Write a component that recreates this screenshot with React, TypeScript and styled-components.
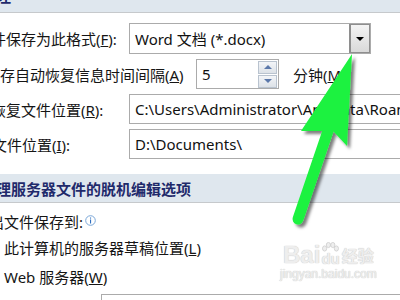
import React from 'react'
import styled, { createGlobalStyle } from 'styled-components'

const GlobalStyle = createGlobalStyle`
  html, body {
    margin: 0;
    padding: 0;
    background: #ffffff;
  }
`

const Page = styled.div`
  position: relative;
  width: 400px;
  height: 300px;
  overflow: hidden;
  background: #ffffff;
  color: #151515;
  font-family: "Noto Sans", "Noto Sans CJK SC", sans-serif;
  font-size: 15px;
`

const Band = styled.div<{ $h: number; $top?: number }>`
  display: flex;
  align-items: center;
  height: ${(p) => p.$h}px;
  margin-top: ${(p) => p.$top ?? 0}px;
  background: #dfe7ee;
  border-bottom: 1px solid #c6c9cc;
  overflow: hidden;
`

const BandTitle = styled.div<{ $indent: number; $lift?: number }>`
  margin-top: ${(p) => p.$lift ?? 0}px;
  text-indent: ${(p) => p.$indent}px;
  white-space: nowrap;
  font-family: "Noto Sans CJK SC", sans-serif;
  font-size: 15px;
  font-weight: 700;
  color: #1f2a6b;
`

const Form = styled.div`
  display: flex;
  flex-direction: column;
  gap: 5px;
  padding-top: 10px;
`

const Row = styled.div<{ $h: number }>`
  display: flex;
  align-items: center;
  height: ${(p) => p.$h}px;
`

const Label = styled.div<{ $w: number; $indent: number }>`
  flex: none;
  width: ${(p) => p.$w}px;
  text-indent: ${(p) => p.$indent}px;
  white-space: nowrap;
`

const Field = styled.div<{ $w?: number }>`
  flex: none;
  box-sizing: border-box;
  display: flex;
  align-items: center;
  width: ${(p) => (p.$w ? `${p.$w}px` : '320px')};
  height: 100%;
  padding-left: 5px;
  border: 1px solid #ababab;
  background: #ffffff;
  color: #111;
  white-space: nowrap;
  overflow: hidden;
`

const Combo = styled(Field)`
  justify-content: space-between;
`

const DropButton = styled.div`
  flex: none;
  box-sizing: border-box;
  display: flex;
  align-items: center;
  justify-content: center;
  width: 22px;
  height: calc(100% + 2px);
  margin-right: -1px;
  border: 2px solid #8e8e8e;
  background: linear-gradient(#f4f4f4, #d9d9d9);

  &::after {
    content: '';
    border-left: 4px solid transparent;
    border-right: 4px solid transparent;
    border-top: 4px solid #000;
  }
`

const SpinField = styled(Field)`
  justify-content: space-between;
  padding-right: 1px;
`

const SpinStack = styled.div`
  display: flex;
  flex-direction: column;
  gap: 1px;
`

const SpinButton = styled.div<{ $up?: boolean }>`
  box-sizing: border-box;
  display: flex;
  align-items: center;
  justify-content: center;
  width: 19px;
  height: 13px;
  border: 1px solid #b9c3cf;
  background: linear-gradient(#f3f5f8, #dde2e8);

  &::after {
    content: '';
    border-left: 4px solid transparent;
    border-right: 4px solid transparent;
    ${(p) => (p.$up ? 'border-bottom: 4px solid #5b78aa;' : 'border-top: 4px solid #5b78aa;')}
  }
`

const Unit = styled.div`
  margin-left: 14px;
  white-space: nowrap;
`

const Options = styled.div`
  display: flex;
  flex-direction: column;
`

const SubLabel = styled.div`
  display: flex;
  align-items: center;
  height: 20px;
  margin-top: 8px;
  text-indent: -11px;
  white-space: nowrap;
`

const InfoIcon = styled.svg`
  margin-left: 2px;
  margin-top: -2px;
`

const RadioList = styled.div`
  display: flex;
  flex-direction: column;
  padding-top: 3px;
  padding-left: 4px;
`

const Radio = styled.div`
  height: 29px;
  line-height: 29px;
  white-space: nowrap;
`

const ServerRow = styled.div`
  display: flex;
  height: 30px;
  margin-top: 2px;
  padding-left: 101px;
`

const Overlay = styled.svg`
  position: absolute;
  left: 0;
  top: 0;
  pointer-events: none;
`

const Watermark = styled.div`
  position: absolute;
  left: 280px;
  top: 242px;
  display: flex;
  flex-direction: column;
  align-items: center;
  color: #eeeeee;
  text-shadow: 0 0 1px #cdcdcd, 0 0 1px #cdcdcd;
  pointer-events: none;
`

const WmTop = styled.div`
  display: flex;
  align-items: flex-end;
  font-family: "Liberation Sans", sans-serif;
  font-size: 24px;
  font-weight: 700;
  line-height: 22px;
`

const Paw = styled.span`
  display: inline-flex;
  flex-direction: column;
  align-items: center;
  margin: 0 1px;
  font-size: 15px;
  line-height: 14px;
`

const WmCn = styled.span`
  font-family: "Noto Sans CJK SC", sans-serif;
  font-size: 16px;
  line-height: 22px;
  margin-left: 1px;
`

const WmUrl = styled.div`
  margin-top: 2px;
  font-family: "Liberation Sans", sans-serif;
  font-size: 12px;
  line-height: 13px;
`

export default function App() {
  return (
    <Page>
      <GlobalStyle />
      <Band $h={12}>
        <BandTitle $indent={-4} $lift={-22}>
          理
        </BandTitle>
      </Band>

      <Form>
        <Row $h={31}>
          <Label $w={129} $indent={-9}>
            件保存为此格式(<u>F</u>):
          </Label>
          <Combo $w={242}>
            Word 文档 (*.docx)
            <DropButton />
          </Combo>
        </Row>
        <Row $h={30}>
          <Label $w={196} $indent={0}>
            存自动恢复信息时间间隔(<u>A</u>)
          </Label>
          <SpinField $w={83}>
            5
            <SpinStack>
              <SpinButton $up />
              <SpinButton />
            </SpinStack>
          </SpinField>
          <Unit>
            分钟(<u>M</u>)
          </Unit>
        </Row>
        <Row $h={30}>
          <Label $w={129} $indent={-9}>
            恢复文件位置(<u>R</u>):
          </Label>
          <Field>C:\Users\Administrator\AppData\Roaming\Microsoft\Word\</Field>
        </Row>
        <Row $h={30}>
          <Label $w={129} $indent={-8}>
            文件位置(<u>I</u>):
          </Label>
          <Field>D:\Documents\</Field>
        </Row>
      </Form>

      <Band $h={28} $top={15}>
        <BandTitle $indent={-4}>理服务器文件的脱机编辑选项</BandTitle>
      </Band>

      <Options>
        <SubLabel>
          出文件保存到:
          <InfoIcon width="11" height="11" viewBox="0 0 11 11">
            <circle cx="5.5" cy="5.5" r="4.8" fill="#fff" stroke="#7aa7d8" strokeWidth="1" />
            <rect x="5" y="4.5" width="1.1" height="4" fill="#2f6fc0" />
            <rect x="5" y="2.5" width="1.1" height="1.1" fill="#2f6fc0" />
          </InfoIcon>
        </SubLabel>
        <RadioList>
          <Radio>
            此计算机的服务器草稿位置(<u>L</u>)
          </Radio>
          <Radio>
            Web 服务器(<u>W</u>)
          </Radio>
        </RadioList>
        <ServerRow>
          <Field />
        </ServerRow>
      </Options>

      <Watermark>
        <WmTop>
          Bai
          <Paw>
            <svg width="17" height="10" viewBox="0 0 17 10">
              <g fill="#eeeeee" stroke="#cdcdcd" strokeWidth="0.8">
                <ellipse cx="2.6" cy="6.5" rx="2.1" ry="2.6" />
                <ellipse cx="6.4" cy="3" rx="2.1" ry="2.6" />
                <ellipse cx="10.8" cy="3" rx="2.1" ry="2.6" />
                <ellipse cx="14.4" cy="6.5" rx="2.1" ry="2.6" />
              </g>
            </svg>
            du
          </Paw>
          <WmCn>经验</WmCn>
        </WmTop>
        <WmUrl>jingyan.baidu.com</WmUrl>
      </Watermark>

      <Overlay width="400" height="300" viewBox="0 0 400 300">
        <defs>
          <filter id="arrowShadow" x="-30%" y="-10%" width="160%" height="130%">
            <feDropShadow dx="3" dy="3" stdDeviation="1.8" floodColor="#000" floodOpacity="0.5" />
          </filter>
        </defs>
        <g filter="url(#arrowShadow)">
          <line x1="298" y1="219" x2="329" y2="128" stroke="#1ff23f" strokeWidth="11" strokeLinecap="round" />
          <polygon points="352,54 347,146 333,131 301,131" fill="#1ff23f" />
        </g>
      </Overlay>
    </Page>
  )
}
